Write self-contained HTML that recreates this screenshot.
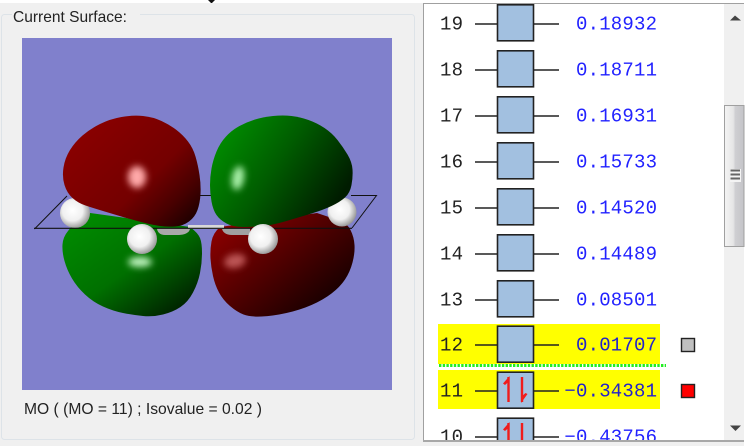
<!DOCTYPE html>
<html>
<head>
<meta charset="utf-8">
<style>
html,body{margin:0;padding:0;width:747px;height:446px;overflow:hidden;background:#f0f0f0}
svg{display:block;position:absolute;left:0;top:0}
.n{font-family:"Liberation Mono",monospace;font-size:19px;fill:#222}
.v{font-family:"Liberation Mono",monospace;font-size:19px;fill:#2222ff;letter-spacing:.2px}
.vy{font-family:"Liberation Mono",monospace;font-size:19px;fill:#2222cc;letter-spacing:.2px}
.s{font-family:"Liberation Sans",sans-serif;font-size:16px;fill:#222}
</style>
</head>
<body>
<svg width="747" height="446" viewBox="0 0 747 446" xmlns="http://www.w3.org/2000/svg">
<defs>
<linearGradient id="r1" x1="0.1" y1="0.25" x2="0.95" y2="0.95"><stop offset="0" stop-color="#880000"/><stop offset="0.55" stop-color="#740000"/><stop offset="0.8" stop-color="#480000"/><stop offset="1" stop-color="#1c0000"/></linearGradient>
<linearGradient id="g1" x1="0.1" y1="0.15" x2="0.85" y2="0.95"><stop offset="0" stop-color="#008800"/><stop offset="0.5" stop-color="#007000"/><stop offset="0.8" stop-color="#004000"/><stop offset="1" stop-color="#002000"/></linearGradient>
<linearGradient id="g2" x1="0.05" y1="0.3" x2="0.9" y2="0.75"><stop offset="0" stop-color="#008800"/><stop offset="0.45" stop-color="#005c00"/><stop offset="1" stop-color="#001c00"/></linearGradient>
<linearGradient id="r2" x1="0.05" y1="0.2" x2="0.8" y2="0.85"><stop offset="0" stop-color="#860000"/><stop offset="0.5" stop-color="#500000"/><stop offset="1" stop-color="#1a0000"/></linearGradient>
<radialGradient id="h" cx="0.42" cy="0.42" r="0.62"><stop offset="0" stop-color="#ffffff"/><stop offset="0.55" stop-color="#f0f0f0"/><stop offset="1" stop-color="#909090"/></radialGradient>
<linearGradient id="th" x1="0" x2="1" y1="0" y2="0"><stop offset="0" stop-color="#f4f4f4"/><stop offset="0.45" stop-color="#e6e6e6"/><stop offset="0.55" stop-color="#cfcfd2"/><stop offset="1" stop-color="#c4c4c8"/></linearGradient>
<filter id="b3" x="-80%" y="-80%" width="260%" height="260%"><feGaussianBlur stdDeviation="3.500"/></filter>
<clipPath id="pc"><rect x="424" y="4" width="300" height="436"/></clipPath>
</defs>

<rect x="0" y="0" width="747" height="3" fill="#ffffff"/>
<path d="M208 0h7l-3 3h-1z" fill="#111"/>
<rect x="744" y="3" width="3" height="443" fill="#ffffff"/>

<!-- group box -->
<rect x="1.500" y="14.500" width="413" height="425" rx="3" fill="#f0f0f0" stroke="#dde3e8"/>
<rect x="12" y="8" width="128" height="12" fill="#f0f0f0"/>
<text class="s" x="13" y="22" textLength="114" lengthAdjust="spacingAndGlyphs">Current Surface:</text>

<!-- canvas -->
<rect x="22" y="38" width="370" height="352" fill="#8080cc"/>

<!-- lower-left green -->
<path d="M83,212 L68,231 Q63,237 62.500,244.500 Q62,252 64.500,261 Q67,270 72,278.500 Q77,287 85,294.500 Q93,302 103,306.500 Q113,311 123,313 Q133,315 143,316 Q153,317 163,314.500 Q173,312 180.500,307 Q188,302 193,292.500 Q198,283 200,273 Q202,263 202,253 Q202,243 200,238 Q198,233 190,227Z" fill="url(#g1)"/>
<ellipse cx="140" cy="262" rx="12" ry="5" fill="#c0f4c0" filter="url(#b3)"/>
<!-- lower-right red -->
<path d="M317,213 L340,220.700 Q347,223 350.500,230 Q354,237 354.500,245 Q355,253 352.500,262.500 Q350,272 345,279.500 Q340,287 331.500,293.500 Q323,300 311.500,305 Q300,310 286.500,313 Q273,316 261.500,316.500 Q250,317 243.500,314.500 Q237,312 230,306 Q223,300 219,292.500 Q215,285 213,276 Q211,267 210.500,258.500 Q210,250 211.500,241.500 Q213,233 220,227Z" fill="url(#r2)"/>
<ellipse cx="235" cy="261" rx="11" ry="7" fill="#bc5454" filter="url(#b3)" transform="rotate(-12 235 261)"/>

<!-- plane back line -->
<path d="M34.500 229L67 196M200 195.500H212M351 195.500H376.500L352 228" fill="none" stroke="#111" stroke-width="1"/>

<!-- back hydrogens -->
<circle cx="75" cy="213" r="15" fill="url(#h)"/>
<circle cx="342" cy="212" r="14.500" fill="url(#h)"/>

<!-- carbon bits and bond -->
<rect x="188" y="225" width="36" height="4" fill="#d8d8d8"/>
<path d="M157 228H190C190 233 184 235 178 235H165C160 235 157 232 157 228Z" fill="#a8a8a8"/>
<path d="M222 228H250V235H232C226 235 222 232 222 228Z" fill="#a0a0a0"/>

<!-- upper-left red -->
<path d="M121.500,117 Q133,115 143,116 Q153,117 161.500,121 Q170,125 176.500,130 Q183,135 188,141.500 Q193,148 195.500,156.500 Q198,165 199.500,175 Q201,185 200.500,194 Q200,203 197.500,210 Q195,217 189,221.500 Q183,226 175,226.500 Q167,227 160,226 Q153,225 143,222.500 Q133,220 123,217 Q113,214 103,211 Q93,208 85.500,205.500 Q78,203 72.500,198 Q67,193 64.500,185 Q62,177 63.500,167.500 Q65,158 70,150 Q75,142 82.500,135.500 Q90,129 100,124 Q110,119 121.500,117Z" fill="url(#r1)"/>
<ellipse cx="137" cy="177" rx="9" ry="11" fill="#ffa8a8" filter="url(#b3)"/>

<!-- upper-right green -->
<path d="M273,116 Q283,115 291.500,116 Q300,117 308.500,120 Q317,123 324.500,128 Q332,133 337.500,140 Q343,147 347.500,154.500 Q352,162 352.500,169.500 Q353,177 351.500,185 Q350,193 345,197.500 Q340,202 331.500,206 Q323,210 311.500,213.500 Q300,217 286.500,221 Q273,225 263,226 Q253,227 243,227 Q233,227 226.500,223.500 Q220,220 216.500,215 Q213,210 211.500,201.500 Q210,193 210,185 Q210,177 211.500,168.500 Q213,160 216.500,151.500 Q220,143 226,136.500 Q232,130 239.500,126 Q247,122 255,119.500 Q263,117 273,116Z" fill="url(#g2)"/>
<ellipse cx="238" cy="178" rx="6" ry="12" fill="#a8f0a8" filter="url(#b3)" transform="rotate(10 238 178)"/>

<!-- front line -->
<path d="M34 228.300H352" stroke="#111" stroke-width="1.200" fill="none"/>

<!-- front hydrogens -->
<circle cx="142" cy="239" r="15" fill="url(#h)"/>
<circle cx="263" cy="239" r="15" fill="url(#h)"/>

<text class="s" x="24" y="414" textLength="238" lengthAdjust="spacingAndGlyphs">MO ( (MO = 11) ; Isovalue = 0.02 )</text>

<!-- right panel -->
<rect x="423" y="3" width="321" height="438" fill="#ffffff"/>
<path d="M744 3.500H423.500V441" fill="none" stroke="#a0a0a0"/>
<rect x="423" y="440" width="321" height="2" fill="#a8a8a8"/>

<!-- highlights -->
<rect x="438" y="324" width="222" height="40" fill="#ffff00"/>
<rect x="438" y="370" width="222" height="39" fill="#ffff00"/>
<path d="M439 365.500H666" stroke="#22ee22" stroke-width="3" stroke-dasharray="2.400 1.300" fill="none"/>

<g clip-path="url(#pc)">
<g fill="#a2c0e0" stroke="#222" stroke-width="1.600">
<rect x="497.500" y="4.800" width="36" height="36"/>
<rect x="497.500" y="50.800" width="36" height="36"/>
<rect x="497.500" y="96.800" width="36" height="36"/>
<rect x="497.500" y="142.800" width="36" height="36"/>
<rect x="497.500" y="188.800" width="36" height="36"/>
<rect x="497.500" y="234.800" width="36" height="36"/>
<rect x="497.500" y="280.800" width="36" height="36"/>
<rect x="497.500" y="326.200" width="36" height="36"/>
<rect x="497.500" y="372.200" width="36" height="36"/>
<rect x="497.500" y="418.200" width="36" height="36"/>
</g>
<path d="M475 24H497M534 24H559M475 70H497M534 70H559M475 116H497M534 116H559M475 162H497M534 162H559M475 208H497M534 208H559M475 254H497M534 254H559M475 300H497M534 300H559M475 345H497M534 345H559M475 391H497M534 391H559M475 437H497M534 437H559" stroke="#222" stroke-width="1.500" fill="none"/>

<!-- electrons -->
<path d="M508.500 377V402" stroke="#f01c1c" stroke-width="2.400" fill="none"/>
<path d="M509.500 376L503 383.500L505 385L509.500 381Z" fill="#f01c1c"/>
<path d="M522 377V402" stroke="#f01c1c" stroke-width="2.400" fill="none"/>
<path d="M521 403L527.500 394L525.500 393L521 397Z" fill="#f01c1c"/>
<path d="M508.500 423V448" stroke="#f01c1c" stroke-width="2.400" fill="none"/>
<path d="M509.500 422L503 429.500L505 431L509.500 427Z" fill="#f01c1c"/>
<path d="M522 423V448" stroke="#f01c1c" stroke-width="2.400" fill="none"/>

<text class="n" x="440" y="29.500" textLength="23" lengthAdjust="spacing">19</text>
<text class="n" x="440" y="75.500" textLength="23" lengthAdjust="spacing">18</text>
<text class="n" x="440" y="121.500" textLength="23" lengthAdjust="spacing">17</text>
<text class="n" x="440" y="167.500" textLength="23" lengthAdjust="spacing">16</text>
<text class="n" x="440" y="213.500" textLength="23" lengthAdjust="spacing">15</text>
<text class="n" x="440" y="259.500" textLength="23" lengthAdjust="spacing">14</text>
<text class="n" x="440" y="305.500" textLength="23" lengthAdjust="spacing">13</text>
<text class="n" x="440" y="350.500" textLength="23" lengthAdjust="spacing">12</text>
<text class="n" x="440" y="396.500" textLength="23" lengthAdjust="spacing">11</text>
<text class="n" x="440" y="442.500" textLength="23" lengthAdjust="spacing">10</text>

<text class="v" x="576" y="29.500">0.18932</text>
<text class="v" x="576" y="75.500">0.18711</text>
<text class="v" x="576" y="121.500">0.16931</text>
<text class="v" x="576" y="167.500">0.15733</text>
<text class="v" x="576" y="213.500">0.14520</text>
<text class="v" x="576" y="259.500">0.14489</text>
<text class="v" x="576" y="305.500">0.08501</text>
<text class="vy" x="576" y="350.500">0.01707</text>
<text class="vy" x="564.400" y="396.500">−0.34381</text>
<text class="v" x="564.400" y="442.500">−0.43756</text>
</g>

<!-- markers -->
<rect x="681.500" y="338.500" width="13" height="13" fill="#c0c0c0" stroke="#222" stroke-width="1.400"/>
<rect x="681.500" y="384.500" width="13" height="13" fill="#ff0000" stroke="#222" stroke-width="1.400"/>

<!-- scrollbar -->
<rect x="724" y="4" width="20" height="436" fill="#f0f0f0"/>
<path d="M730 20.500L735 15.500L741 20.500Z" fill="#444"/>
<path d="M730 425.500H741L735.500 431Z" fill="#444"/>
<rect x="724.500" y="105.500" width="19.500" height="141" fill="url(#th)" stroke="#a0a0a0"/>
<rect x="730" y="169" width="11" height="13" fill="#f4f4f4"/>
<path d="M730.500 170.500H740M730.500 174.500H740M730.500 178.500H740" stroke="#666" stroke-width="2" fill="none"/>
</svg>
</body>
</html>
